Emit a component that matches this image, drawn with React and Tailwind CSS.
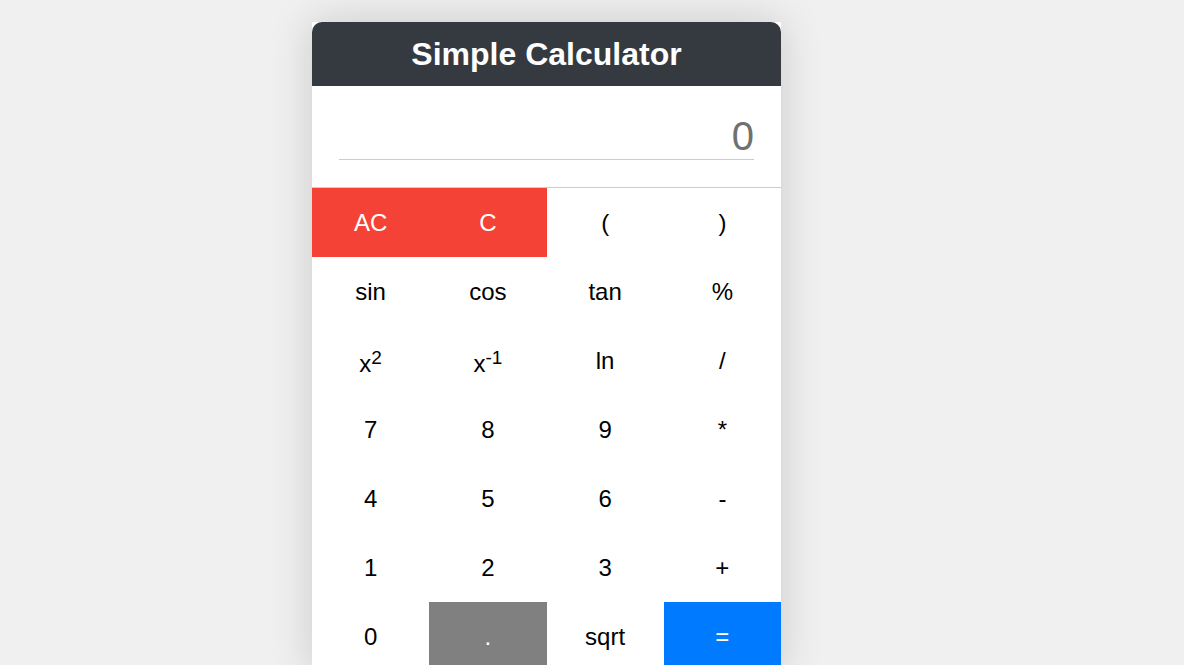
const Sup = ({ children }) => (
  <sup className="text-[19px] leading-none align-baseline relative top-[-8px]">{children}</sup>
)

const rows = [
  [
    { label: 'AC', tone: 'red' },
    { label: 'C', tone: 'red' },
    { label: '(' },
    { label: ')' },
  ],
  [{ label: 'sin' }, { label: 'cos' }, { label: 'tan' }, { label: '%' }],
  [
    { label: <span className="inline-block mt-[7px]">x<Sup>2</Sup></span> },
    { label: <span className="inline-block mt-[7px]">x<Sup>-1</Sup></span> },
    { label: 'ln' },
    { label: '/' },
  ],
  [{ label: '7' }, { label: '8' }, { label: '9' }, { label: '*' }],
  [{ label: '4' }, { label: '5' }, { label: '6' }, { label: '-' }],
  [{ label: '1' }, { label: '2' }, { label: '3' }, { label: '+' }],
  [
    { label: '0' },
    { label: '.', tone: 'gray' },
    { label: 'sqrt' },
    { label: '=', tone: 'blue' },
  ],
]

const toneClasses = (tone) => {
  const tones = {
    red: 'bg-[#f44336] text-white',
    gray: 'bg-[#808080] text-white',
    blue: 'bg-[#007bff] text-white',
  }
  return tones[tone] || 'bg-white text-black'
}

const CalcButton = ({ label, tone }) => (
  <button
    className={`h-[69px] w-full flex items-center justify-center text-[24px] ${toneClasses(tone)}`}
  >
    {label}
  </button>
)

export default function App() {
  return (
    <div
      className="min-h-screen bg-[#f0f0f0] pt-[22px]"
      style={{ fontFamily: '"Liberation Sans", Arial, sans-serif' }}
    >
      <div className="ml-[312px] w-[469px] bg-white shadow-[0_0_40px_rgba(0,0,0,0.16)]">
        {/* Header */}
        <div className="h-[64px] bg-[#343a40] rounded-t-[10px] flex items-center justify-center">
          <h1 className="text-[32px] font-bold text-white">Simple Calculator</h1>
        </div>

        {/* Display */}
        <div className="p-[27px] border-b border-[#cccccc]">
          <div className="h-[47px] border-b border-[#cccccc] text-right text-[40px] leading-[46px] text-[#707070]">
            0
          </div>
        </div>

        {/* Keypad */}
        <div className="grid grid-cols-4">
          {rows.flat().map((btn, i) => (
            <CalcButton key={i} label={btn.label} tone={btn.tone} />
          ))}
        </div>
      </div>
    </div>
  )
}
